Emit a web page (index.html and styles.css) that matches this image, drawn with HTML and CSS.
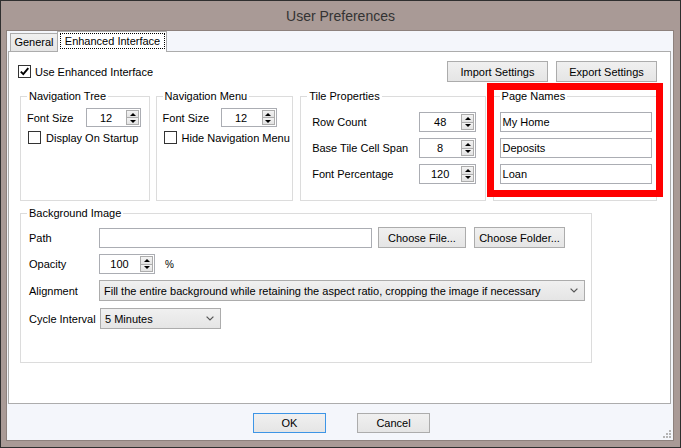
FILE: index.html
```html
<!DOCTYPE html>
<html>
<head>
<meta charset="utf-8">
<title>User Preferences</title>
<link rel="stylesheet" href="styles.css">
</head>
<body>
<div class="window">
  <div class="titlebar">User Preferences</div>
  <div class="client">
    <div class="tabs">
      <div class="tab">General</div>
      <div class="tab active"><span class="focus">Enhanced Interface</span></div>
    </div>
    <div class="panel">
      <div class="toprow">
        <div class="check">
          <span class="box"><svg width="11" height="11" viewBox="0 0 11 11"><path d="M1.8 5.6 L4.3 8.2 L9.3 2.2" fill="none" stroke="#000" stroke-width="1.9"/></svg></span>
          <span>Use Enhanced Interface</span>
        </div>
        <div class="actions">
          <div class="btn w101">Import Settings</div>
          <div class="btn w101">Export Settings</div>
        </div>
      </div>

      <div class="groups">
        <fieldset class="group g-tree">
          <legend>Navigation Tree</legend>
          <div class="row h19">
            <span class="lbl w59">Font Size</span>
            <div class="num w55"><span class="val">12</span><span class="spin"><i class="up"></i><i class="dn"></i></span></div>
          </div>
          <div class="check sub">
            <span class="box"></span>
            <span>Display On Startup</span>
          </div>
        </fieldset>

        <fieldset class="group g-menu">
          <legend>Navigation Menu</legend>
          <div class="row h19">
            <span class="lbl w58">Font Size</span>
            <div class="num w56"><span class="val">12</span><span class="spin"><i class="up"></i><i class="dn"></i></span></div>
          </div>
          <div class="check sub">
            <span class="box"></span>
            <span>Hide Navigation Menu</span>
          </div>
        </fieldset>

        <fieldset class="group g-tile">
          <legend>Tile Properties</legend>
          <div class="stack">
            <div class="row h20 indent">
              <span class="lbl w107">Row Count</span>
              <div class="num w57"><span class="val">48</span><span class="spin"><i class="up"></i><i class="dn"></i></span></div>
            </div>
            <div class="row h20 indent">
              <span class="lbl w107">Base Tile Cell Span</span>
              <div class="num w57"><span class="val">8</span><span class="spin"><i class="up"></i><i class="dn"></i></span></div>
            </div>
            <div class="row h20 indent">
              <span class="lbl w107">Font Percentage</span>
              <div class="num w57"><span class="val">120</span><span class="spin"><i class="up"></i><i class="dn"></i></span></div>
            </div>
          </div>
        </fieldset>

        <fieldset class="group g-pages">
          <legend>Page Names</legend>
          <div class="stack">
            <div class="text w152">My Home</div>
            <div class="text w152">Deposits</div>
            <div class="text w152">Loan</div>
          </div>
        </fieldset>
      </div>

      <fieldset class="group g-bg">
        <legend>Background Image</legend>
        <div class="bgrows">
          <div class="row h21">
            <span class="lbl w70">Path</span>
            <div class="text w273"></div>
            <div class="btn w88 ml6">Choose File...</div>
            <div class="btn w91 ml8">Choose Folder...</div>
          </div>
          <div class="row h20 mt6">
            <span class="lbl w70">Opacity</span>
            <div class="num w56"><span class="val">100</span><span class="spin"><i class="up"></i><i class="dn"></i></span></div>
            <span class="pct">%</span>
          </div>
          <div class="row h21 mt6">
            <span class="lbl w70">Alignment</span>
            <div class="combo w486"><span class="ctext">Fill the entire background while retaining the aspect ratio, cropping the image if necessary</span><svg class="chev" width="8" height="5" viewBox="0 0 8 5"><polyline points="0.6,0.6 4,4 7.4,0.6" fill="none" stroke="#555" stroke-width="1.2"/></svg></div>
          </div>
          <div class="row h21 mt7">
            <span class="lbl w70">Cycle Interval</span>
            <div class="combo w121 ml1"><span class="ctext">5 Minutes</span><svg class="chev" width="8" height="5" viewBox="0 0 8 5"><polyline points="0.6,0.6 4,4 7.4,0.6" fill="none" stroke="#555" stroke-width="1.2"/></svg></div>
          </div>
        </div>
      </fieldset>
    </div>
    <div class="footer">
      <div class="btn w73 default">OK</div>
      <div class="btn w73">Cancel</div>
      <svg class="grip" width="8" height="8" viewBox="0 0 8 8">
        <rect x="6" y="0" width="2" height="2" fill="#B4B4B4"/>
        <rect x="3" y="3" width="2" height="2" fill="#B4B4B4"/>
        <rect x="6" y="3" width="2" height="2" fill="#B4B4B4"/>
        <rect x="0" y="6" width="2" height="2" fill="#B4B4B4"/>
        <rect x="3" y="6" width="2" height="2" fill="#B4B4B4"/>
        <rect x="6" y="6" width="2" height="2" fill="#B4B4B4"/>
      </svg>
    </div>
  </div>
</div>
<div class="highlight"></div>
</body>
</html>
```

FILE: styles.css
```css
* { box-sizing: border-box; }
html, body { margin: 0; padding: 0; }
body {
  position: relative;
  width: 681px;
  height: 448px;
  overflow: hidden;
  font-family: "Liberation Sans", Arial, sans-serif;
  font-size: 11px;
  color: #000;
  background: #A99A96;
}
.window {
  width: 681px;
  height: 448px;
  background: #A99A96;
  border: 1px solid #2f2f2f;
  display: flex;
  flex-direction: column;
}
.titlebar {
  height: 29px;
  line-height: 30px;
  text-align: center;
  font-size: 14px;
  color: #333;
}
.client {
  flex: 1;
  margin: 0 6px 6px 5px;
  border: 1px solid #8d817d;
  background: #F4F6FB;
  display: flex;
  flex-direction: column;
  position: relative;
}

/* tabs */
.tabs {
  height: 20px;
  display: flex;
  align-items: flex-end;
  padding-left: 3px;
  position: relative;
  z-index: 1;
}
.tab {
  height: 18px;
  width: 48px;
  border: 1px solid #ACACAC;
  border-bottom: 0;
  background: linear-gradient(#F0F0F0, #E5E5E5);
  text-align: center;
  line-height: 17px;
}
.tab.active {
  height: 21px;
  width: 110px;
  margin-left: -1px;
  margin-bottom: -1px;
  background: #fff;
  padding: 1px 1px 3px 2px;
}
.focus {
  display: block;
  height: 100%;
  border: 1px dotted #000;
  line-height: 14px;
}

/* panel */
.panel {
  flex: 1;
  margin: 0 2px 0 1px;
  background: #fff;
  border: 1px solid #ACACAC;
  padding: 9px 13px 0 9px;
}
.toprow {
  display: flex;
  justify-content: space-between;
  align-items: center;
  height: 21px;
}
.actions { display: flex; gap: 8px; }

.btn {
  height: 21px;
  border: 1px solid #ACACAC;
  background: linear-gradient(#F0F0F0, #E5E5E5);
  display: flex;
  align-items: center;
  justify-content: center;
  flex: none;
  white-space: nowrap;
}
.btn.default { border-color: #3D95E6; }

.check { display: flex; align-items: center; gap: 4px; white-space: nowrap; }
.check.sub { margin-top: 4px; margin-left: 1px; gap: 5px; }
.box {
  width: 13px;
  height: 13px;
  border: 1px solid #333;
  background: #fff;
  display: flex;
  flex: none;
}

/* groups */
.groups { display: flex; margin: 7px 0 0 2px; }
fieldset.group {
  margin: 0;
  border: 1px solid #DCDCDC;
  padding: 5px 6px 0 6px;
  min-width: 0;
  height: 112px;
}
legend { padding: 0 2px; line-height: 14px; white-space: nowrap; }
.g-tree { width: 130px; }
.g-menu { width: 138px; margin-left: 6px !important; }
.g-tile { width: 186px; margin-left: 7px !important; padding-top: 9px !important; }
.g-pages { width: 165px; margin-left: 7px !important; padding-top: 9px !important; }
.g-bg {
  width: 572px;
  height: 157px !important;
  margin: 5px 0 0 2px !important;
  padding-top: 7px !important;
}
.bgrows { padding-left: 2px; }

.stack { display: flex; flex-direction: column; gap: 6px; }
.row { display: flex; align-items: center; }
.row.indent { padding-left: 5px; }
.h19 { height: 19px; }
.h20 { height: 20px; }
.h21 { height: 21px; }
.mt6 { margin-top: 6px; }
.mt7 { margin-top: 7px; }
.ml1 { margin-left: 1px; }
.ml6 { margin-left: 6px; }
.ml8 { margin-left: 8px; }
.lbl { flex: none; white-space: nowrap; }
.w55 { width: 55px; }
.w56 { width: 56px; }
.w57 { width: 57px; }
.w58 { width: 58px; }
.w59 { width: 59px; }
.w70 { width: 70px; }
.w73 { width: 73px; }
.w88 { width: 88px; }
.w91 { width: 91px; }
.w101 { width: 101px; }
.w107 { width: 107px; }
.w121 { width: 121px; }
.w152 { width: 152px; }
.w273 { width: 273px; }
.w486 { width: 486px; }

/* numeric up-down */
.num {
  display: flex;
  height: 100%;
  border: 1px solid #ABADB3;
  background: #fff;
  flex: none;
}
.num .val {
  flex: 1;
  text-align: center;
  align-self: center;
}
.spin {
  width: 13px;
  margin: 1px;
  display: flex;
  flex-direction: column;
}
.spin i {
  flex: 1;
  border: 1px solid #ACACAC;
  background: linear-gradient(#F3F3F3, #E3E3E3);
  display: flex;
  align-items: center;
  justify-content: center;
}
.spin i + i { border-top: 0; }
.spin .up::after {
  content: "";
  display: block;
  width: 0;
  height: 0;
  border-left: 3px solid transparent;
  border-right: 3px solid transparent;
  border-bottom: 3px solid #000;
}
.spin .dn::after {
  content: "";
  display: block;
  width: 0;
  height: 0;
  border-left: 3px solid transparent;
  border-right: 3px solid transparent;
  border-top: 3px solid #000;
}

/* textbox */
.text {
  height: 20px;
  border: 1px solid #ABADB3;
  background: #fff;
  padding-left: 2px;
  line-height: 18px;
  flex: none;
}
.pct { margin-left: 10px; font-size: 10px; }

/* combo */
.combo {
  height: 21px;
  display: flex;
  align-items: center;
  border: 1px solid #ACACAC;
  background: linear-gradient(#F0F0F0, #E5E5E5);
  padding: 0 6px 0 4px;
  flex: none;
}
.ctext { flex: 1; white-space: nowrap; overflow: hidden; }
.chev { flex: none; }

/* footer */
.footer {
  height: 36px;
  display: flex;
  justify-content: center;
  align-items: flex-start;
  gap: 31px;
  padding: 9px 0 0 3px;
  flex: none;
}
.footer .btn { height: 20px; }
.grip { position: absolute; right: 2px; bottom: 2px; }

/* annotation overlay */
.highlight {
  position: absolute;
  left: 487px;
  top: 83px;
  width: 176px;
  height: 114px;
  border: 7px solid #FF0000;
}
```
